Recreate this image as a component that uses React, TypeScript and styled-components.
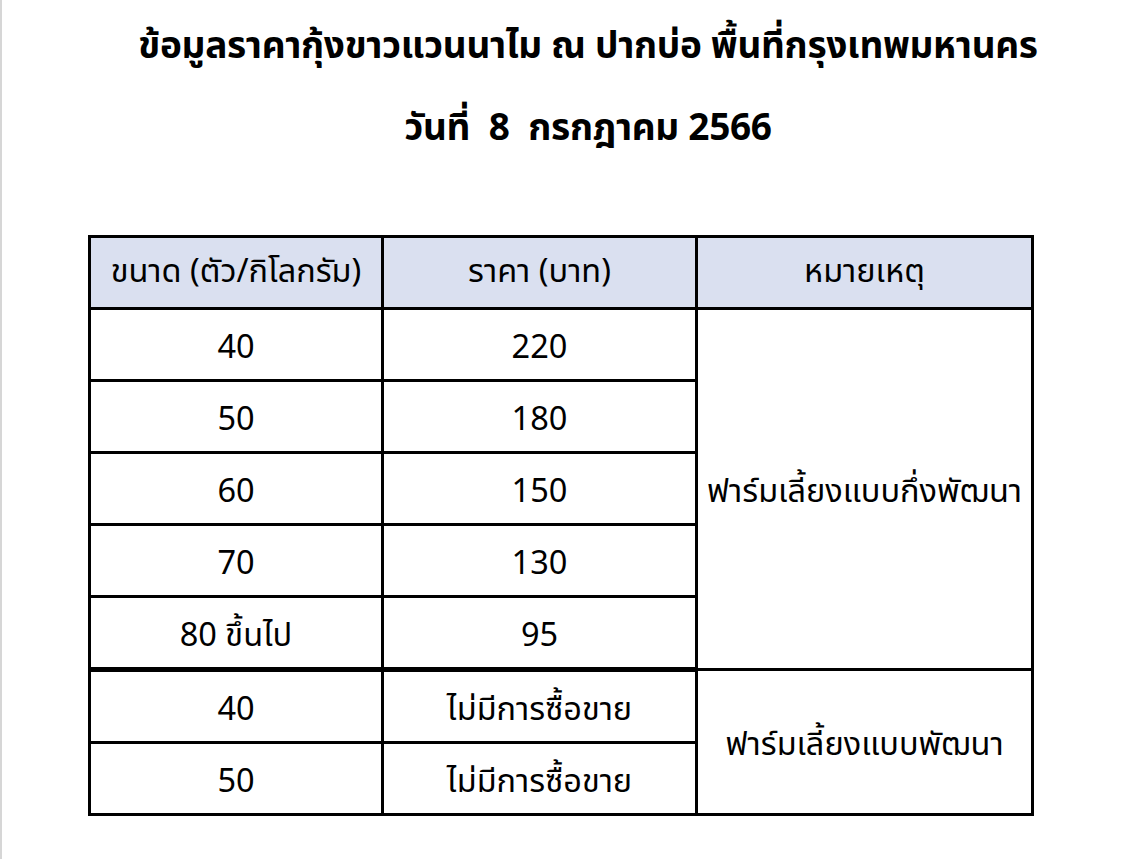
import React from "react";
import styled, { createGlobalStyle } from "styled-components";

const GlobalStyle = createGlobalStyle`
  html, body {
    margin: 0;
    padding: 0;
    background: #ffffff;
  }
  body {
    font-family: "Noto Sans Thai", "Leelawadee UI", Tahoma, "Noto Sans", "DejaVu Sans", sans-serif;
    color: #000;
  }
`;

type PriceRow = { size: string; price: string };

const semiIntensive: PriceRow[] = [
  { size: "40", price: "220" },
  { size: "50", price: "180" },
  { size: "60", price: "150" },
  { size: "70", price: "130" },
  { size: "80 ขึ้นไป", price: "95" },
];

const intensive: PriceRow[] = [
  { size: "40", price: "ไม่มีการซื้อขาย" },
  { size: "50", price: "ไม่มีการซื้อขาย" },
];

const App = () => {
  return (
    <>
      <GlobalStyle />
      <Page>
        <Title>ข้อมูลราคากุ้งขาวแวนนาไม ณ ปากบ่อ พื้นที่กรุงเทพมหานคร</Title>
        <Title>วันที่&nbsp; 8 &nbsp;กรกฎาคม 2566</Title>
        <Table>
          <thead>
            <tr>
              <HeadCell style={{ width: 290 }}>ขนาด (ตัว/กิโลกรัม)</HeadCell>
              <HeadCell style={{ width: 311 }}>ราคา (บาท)</HeadCell>
              <HeadCell>หมายเหตุ</HeadCell>
            </tr>
          </thead>
          <tbody>
            {semiIntensive.map((row, i) => (
              <tr key={"s" + i}>
                <Cell>{row.size}</Cell>
                <Cell>{row.price}</Cell>
                {i === 0 && <Cell rowSpan={semiIntensive.length}>ฟาร์มเลี้ยงแบบกึ่งพัฒนา</Cell>}
              </tr>
            ))}
            {intensive.map((row, i) => (
              <tr key={"i" + i}>
                <Cell $heavyTop={i === 0}>{row.size}</Cell>
                <Cell $heavyTop={i === 0}>{row.price}</Cell>
                {i === 0 && <Cell rowSpan={intensive.length}>ฟาร์มเลี้ยงแบบพัฒนา</Cell>}
              </tr>
            ))}
          </tbody>
        </Table>
      </Page>
    </>
  );
};

export default App;

const Page = styled.div`
  min-height: 859px;
  box-sizing: border-box;
  border-left: 2px solid #d6d6d6;
  padding: 19px 0 0 86px;
`;

const Title = styled.h1`
  margin: 0 0 26px;
  width: 1000px;
  text-align: center;
  font-size: 37px;
  font-weight: 700;
  line-height: 56px;
  letter-spacing: -0.3px;
`;

const Table = styled.table`
  margin-top: 78px;
  width: 946px;
  border-collapse: collapse;
  table-layout: fixed;
`;

const HeadCell = styled.th`
  height: 69px;
  padding: 0;
  background: #dae0f0;
  border: 3px solid #000;
  font-size: 32.5px;
  font-weight: 400;
  text-align: center;
  vertical-align: middle;
`;

const Cell = styled.td<{ $heavyTop?: boolean }>`
  height: 62px;
  padding: 7px 0 0;
  border: 3px solid #000;
  border-top-width: ${({ $heavyTop }) => ($heavyTop ? "5px" : "3px")};
  font-size: 32.5px;
  text-align: center;
  vertical-align: middle;
`;
